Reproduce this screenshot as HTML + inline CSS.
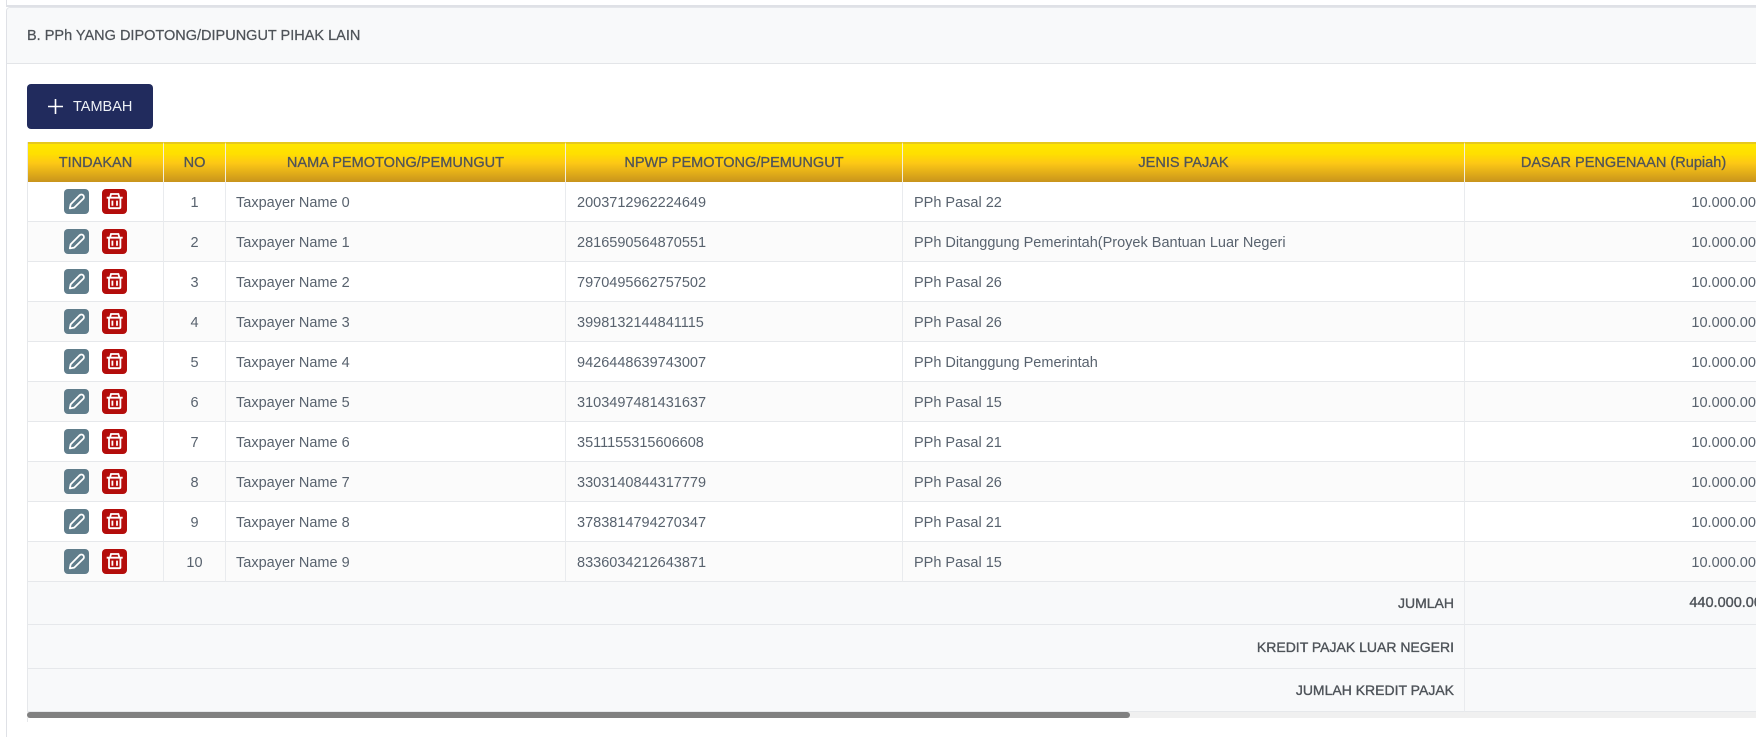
<!DOCTYPE html>
<html lang="id">
<head>
<meta charset="utf-8">
<title>PPh</title>
<style>
html,body{margin:0;padding:0;width:1756px;height:722px;overflow:hidden;background:#fff;font-family:"Liberation Sans",Arial,sans-serif;color:#5c6873}
*{box-sizing:border-box}
.prev{position:absolute;left:6px;top:-10px;width:1760px;height:17px;border:1px solid #dfe1e6;border-bottom:2px solid #dfe1e6}
.card{position:absolute;left:6px;top:7px;width:1760px;height:730px;border-left:1px solid #dfe1e6;border-top:1px solid #e4e6ea;border-top-left-radius:4px;background:#fff}
.hd{position:absolute;left:0;top:0;width:100%;height:56px;background:#f8f9fa;border-bottom:1px solid #e3e5e8;border-top-left-radius:4px}
.hd span{position:absolute;left:20px;top:20px;font-size:14.5px;line-height:17px;color:#4e5359;-webkit-text-stroke:.25px #4e5359;white-space:nowrap}
.btn{position:absolute;left:27px;top:84px;width:126px;height:45px;background:#212b5d;border-radius:4px}
.btn svg{position:absolute;left:21px;top:15px}
.btn span{position:absolute;left:46px;top:15px;font-size:14.5px;line-height:17px;color:#eef1f6;white-space:nowrap}
.wrap{position:absolute;left:27px;top:142px;width:1729px;height:570px;overflow:hidden;border-left:1px solid #e6e8eb}
table{border-collapse:separate;border-spacing:0;table-layout:fixed;width:1755px;font-size:14.5px}
th{height:40px;padding:0;background:linear-gradient(#ffe600 0%,#ffe000 25%,#fdc815 50%,#c8941c 100%);border-top:2px solid #e6c81e;border-right:1px solid #f3eedd;font-weight:normal;font-size:14.55px;color:#515458;-webkit-text-stroke:.3px #515458;text-align:center;white-space:nowrap}
td{height:40px;padding:2px 10px 0;border-right:1px solid #e9ebee;border-bottom:1px solid #e6e8eb;white-space:nowrap;font-size:14.5px;color:#58626e}
td.p{padding-left:11px}
tbody tr:nth-child(even) td{background:#fbfbfb}
td.c{text-align:center;padding:2px 0 0}
td.r{text-align:right;padding-right:18px}
tr.f td{background:#f8f9fa!important;text-align:right;padding:0 10px 0 0;font-size:14px;color:#4e5359;-webkit-text-stroke:.35px #4e5359}
tr.f td:last-child{padding-right:12px;font-size:14.5px}
.ib{display:inline-block;vertical-align:top;width:25px;height:25px;border-radius:4px}
.e{background:#607d8b;margin-right:13px}
.d{background:#b40d0b}
td.a{padding:7px 0 0 36px;vertical-align:top}
.sb{position:absolute;left:27px;top:712px;width:1729px;height:6px;background:#f0f0f0}
.th{position:absolute;left:0;top:0;width:1103px;height:6px;background:#808080;border-radius:3px}
.bl{position:absolute;left:27px;top:718px;width:1px;height:4px;background:#e6e8eb}
</style>
</head>
<body>
<svg width="0" height="0" style="position:absolute">
<symbol id="pen" viewBox="0 0 25 25"><path d="M5.8 19.4 6.7 15.2 15.6 6.3C16.6 5.3 18.2 5.3 19.2 6.3 20.2 7.3 20.2 8.9 19.2 9.9L10.2 18.6Z" fill="none" stroke="#fff" stroke-width="1.8" stroke-linejoin="round"/></symbol>
<symbol id="bin" viewBox="0 0 25 25"><path d="M4.7 8.7H20.7M8 8.7 9 5H16.4L17.4 8.7M7 8.7V18.2Q7 19.2 8 19.2H17.4Q18.4 19.2 18.4 18.2V8.7M10.4 11.6V16.8M15 11.6V16.8" fill="none" stroke="#fff" stroke-width="1.8"/></symbol>
</svg>
<div class="prev"></div>
<div class="card"><div class="hd"><span>B. PPh YANG DIPOTONG/DIPUNGUT PIHAK LAIN</span></div></div>
<div class="btn"><svg width="15" height="15" viewBox="0 0 15 15"><path d="M7.5 0V15M0 7.5H15" stroke="#fff" stroke-width="1.6"/></svg><span>TAMBAH</span></div>
<div class="wrap">
<table>
<colgroup><col style="width:136px"><col style="width:62px"><col style="width:340px"><col style="width:337px"><col style="width:562px"><col style="width:318px"></colgroup>
<thead><tr><th>TINDAKAN</th><th>NO</th><th>NAMA PEMOTONG/PEMUNGUT</th><th>NPWP PEMOTONG/PEMUNGUT</th><th>JENIS PAJAK</th><th>DASAR PENGENAAN (Rupiah)</th></tr></thead>
<tbody>
<tr><td class="a"><span class="ib e"><svg width="25" height="25"><use href="#pen"/></svg></span><span class="ib d"><svg width="25" height="25"><use href="#bin"/></svg></span></td><td class="c">1</td><td>Taxpayer Name 0</td><td class="p">2003712962224649</td><td class="p">PPh Pasal 22</td><td class="r">10.000.000</td></tr>
<tr><td class="a"><span class="ib e"><svg width="25" height="25"><use href="#pen"/></svg></span><span class="ib d"><svg width="25" height="25"><use href="#bin"/></svg></span></td><td class="c">2</td><td>Taxpayer Name 1</td><td class="p">2816590564870551</td><td class="p">PPh Ditanggung Pemerintah(Proyek Bantuan Luar Negeri</td><td class="r">10.000.000</td></tr>
<tr><td class="a"><span class="ib e"><svg width="25" height="25"><use href="#pen"/></svg></span><span class="ib d"><svg width="25" height="25"><use href="#bin"/></svg></span></td><td class="c">3</td><td>Taxpayer Name 2</td><td class="p">7970495662757502</td><td class="p">PPh Pasal 26</td><td class="r">10.000.000</td></tr>
<tr><td class="a"><span class="ib e"><svg width="25" height="25"><use href="#pen"/></svg></span><span class="ib d"><svg width="25" height="25"><use href="#bin"/></svg></span></td><td class="c">4</td><td>Taxpayer Name 3</td><td class="p">3998132144841115</td><td class="p">PPh Pasal 26</td><td class="r">10.000.000</td></tr>
<tr><td class="a"><span class="ib e"><svg width="25" height="25"><use href="#pen"/></svg></span><span class="ib d"><svg width="25" height="25"><use href="#bin"/></svg></span></td><td class="c">5</td><td>Taxpayer Name 4</td><td class="p">9426448639743007</td><td class="p">PPh Ditanggung Pemerintah</td><td class="r">10.000.000</td></tr>
<tr><td class="a"><span class="ib e"><svg width="25" height="25"><use href="#pen"/></svg></span><span class="ib d"><svg width="25" height="25"><use href="#bin"/></svg></span></td><td class="c">6</td><td>Taxpayer Name 5</td><td class="p">3103497481431637</td><td class="p">PPh Pasal 15</td><td class="r">10.000.000</td></tr>
<tr><td class="a"><span class="ib e"><svg width="25" height="25"><use href="#pen"/></svg></span><span class="ib d"><svg width="25" height="25"><use href="#bin"/></svg></span></td><td class="c">7</td><td>Taxpayer Name 6</td><td class="p">3511155315606608</td><td class="p">PPh Pasal 21</td><td class="r">10.000.000</td></tr>
<tr><td class="a"><span class="ib e"><svg width="25" height="25"><use href="#pen"/></svg></span><span class="ib d"><svg width="25" height="25"><use href="#bin"/></svg></span></td><td class="c">8</td><td>Taxpayer Name 7</td><td class="p">3303140844317779</td><td class="p">PPh Pasal 26</td><td class="r">10.000.000</td></tr>
<tr><td class="a"><span class="ib e"><svg width="25" height="25"><use href="#pen"/></svg></span><span class="ib d"><svg width="25" height="25"><use href="#bin"/></svg></span></td><td class="c">9</td><td>Taxpayer Name 8</td><td class="p">3783814794270347</td><td class="p">PPh Pasal 21</td><td class="r">10.000.000</td></tr>
<tr><td class="a"><span class="ib e"><svg width="25" height="25"><use href="#pen"/></svg></span><span class="ib d"><svg width="25" height="25"><use href="#bin"/></svg></span></td><td class="c">10</td><td>Taxpayer Name 9</td><td class="p">8336034212643871</td><td class="p">PPh Pasal 15</td><td class="r">10.000.000</td></tr>
<tr class="f"><td colspan="5" style="height:43px">JUMLAH</td><td style="height:43px">440.000.000</td></tr>
<tr class="f"><td colspan="5" style="height:44px">KREDIT PAJAK LUAR NEGERI</td><td style="height:44px"></td></tr>
<tr class="f"><td colspan="5" style="height:43px">JUMLAH KREDIT PAJAK</td><td style="height:43px"></td></tr>
</tbody>
</table>
</div>
<div class="sb"><div class="th"></div></div>
<div class="bl"></div>
</body>
</html>
